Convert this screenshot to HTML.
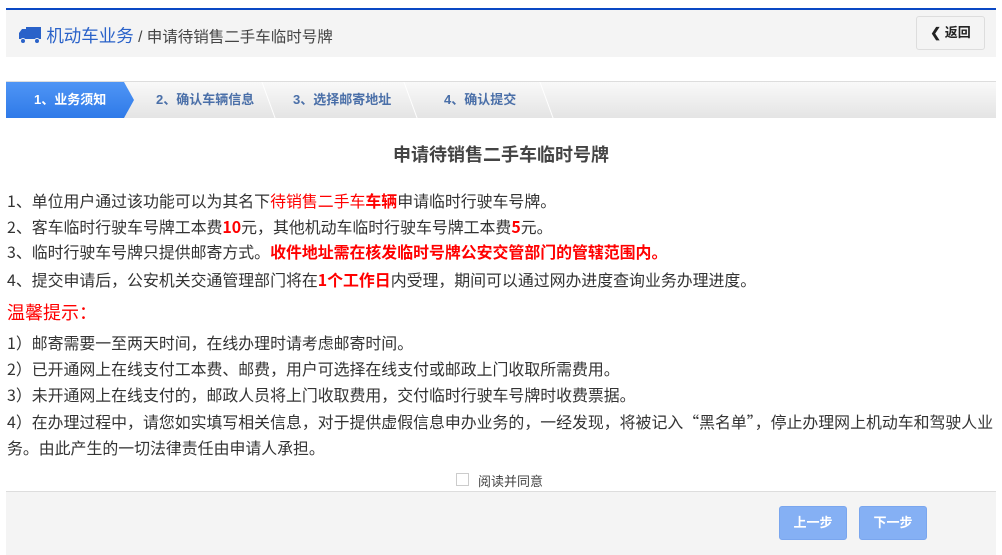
<!DOCTYPE html>
<html><head><meta charset="utf-8"><style>
*{margin:0;padding:0;box-sizing:border-box}
body{width:1002px;height:555px;background:#fff;font-family:"Liberation Sans","Noto Sans CJK SC",sans-serif;color:#333;position:relative;overflow:hidden}
.topline{position:absolute;left:6px;top:8px;width:990px;height:2px;background:#0a48c4}
.hdr{position:absolute;left:6px;top:10px;width:990px;height:47px;background:#f4f4f4}
.crumb{position:absolute;left:12px;top:13px;font-size:15.5px;color:#444;white-space:nowrap}
.crumb .b{color:#2a62c9;font-size:17.5px}
.back{position:absolute;left:910px;top:6px;width:69px;height:34px;border:1px solid #ddd;border-radius:3px;background:#f4f4f4;font-size:13px;font-weight:bold;color:#222;text-align:center;line-height:32px}
.steps{position:absolute;left:6px;top:81px;width:990px;height:37px;background:linear-gradient(#f9f9f9,#e4e4e4);border-top:1px solid #ddd}
.st{position:absolute;top:0;height:36px;line-height:36px;font-size:13px;font-weight:bold;color:#4a6fa8;white-space:nowrap}
.s1{position:absolute;left:0;top:0;width:128px;height:36px;background:linear-gradient(#4f95f5,#2f7ae8);clip-path:polygon(0 0,118px 0,128px 18px,118px 36px,0 36px)}
.sep{position:absolute;top:0;width:1px;height:36px;background:#fff;transform:skewX(20deg)}
.title{position:absolute;left:0;width:1002px;top:141px;text-align:center;font-size:18px;font-weight:bold;color:#444}
.p{position:absolute;left:7px;font-size:15.9px;white-space:nowrap;color:#333;font-family:"Noto Sans CJK SC",sans-serif;line-height:20px}
.r{color:#f00}.rb{color:#f00;font-weight:bold}
.tip{position:absolute;left:7px;top:300px;font-size:18px;color:#f00;font-family:"Noto Sans CJK SC",sans-serif;line-height:24px}
.chk{position:absolute;left:456px;top:473px;width:13px;height:13px;border:1px solid #ccc;background:#fff}
.agree{position:absolute;left:478px;top:471px;font-size:13px;color:#444}
.foot{position:absolute;left:6px;top:491px;width:990px;height:64px;background:#f4f4f4;border-top:1px solid #ddd}
.btn{position:absolute;top:14px;width:68px;height:34px;background:#85b0f4;border:1px solid #7aa6ee;border-radius:3px;color:#fff;font-size:13px;font-weight:bold;text-align:center;line-height:32px}
</style></head><body>
<div class="topline"></div>
<div class="hdr">
<div class="crumb"><svg width="24" height="18" viewBox="0 0 24 18" style="vertical-align:-2px"><path d="M8 1h15v12H8z M1 7l3-4h4v10H1z" fill="#2a62c9"/><circle cx="5" cy="15" r="2.5" fill="#2a62c9" stroke="#f4f4f4"/><circle cx="19" cy="15" r="2.5" fill="#2a62c9" stroke="#f4f4f4"/></svg> <span class="b">机动车业务</span> / 申请待销售二手车临时号牌</div>
<div class="back">❮ 返回</div>
</div>
<div class="steps">
<div class="s1"></div>
<div class="st" style="left:28px;color:#fff">1、业务须知</div>
<div class="st" style="left:150px">2、确认车辆信息</div>
<div class="sep" style="left:262px"></div>
<div class="st" style="left:287px">3、选择邮寄地址</div>
<div class="sep" style="left:404px"></div>
<div class="st" style="left:438px">4、确认提交</div>
<div class="sep" style="left:540px"></div>
</div>
<div class="title">申请待销售二手车临时号牌</div>
<div class="p" style="top:191px">1、单位用户通过该功能可以为其名下<span class="r">待销售二手车</span><span class="rb">车辆</span>申请临时行驶车号牌。</div>
<div class="p" style="top:217px">2、客车临时行驶车号牌工本费<span class="rb">10</span>元，其他机动车临时行驶车号牌工本费<span class="rb">5</span>元。</div>
<div class="p" style="top:242px">3、临时行驶车号牌只提供邮寄方式。<span class="rb">收件地址需在核发临时号牌公安交管部门的管辖范围内。</span></div>
<div class="p" style="top:270px">4、提交申请后，公安机关交通管理部门将在<span class="rb">1个工作日</span>内受理，期间可以通过网办进度查询业务办理进度。</div>
<div class="tip">温馨提示：</div>
<div class="p" style="top:333px">1）邮寄需要一至两天时间，在线办理时请考虑邮寄时间。</div>
<div class="p" style="top:359px">2）已开通网上在线支付工本费、邮费，用户可选择在线支付或邮政上门收取所需费用。</div>
<div class="p" style="top:385px">3）未开通网上在线支付的，邮政人员将上门收取费用，交付临时行驶车号牌时收费票据。</div>
<div class="p" style="top:412px">4）在办理过程中，请您如实填写相关信息，对于提供虚假信息申办业务的，一经发现，将被记入“黑名单”，停止办理网上机动车和驾驶人业</div>
<div class="p" style="top:438px">务。由此产生的一切法律责任由申请人承担。</div>
<div class="chk"></div><div class="agree">阅读并同意</div>
<div class="foot">
<div class="btn" style="left:773px">上一步</div>
<div class="btn" style="left:853px">下一步</div>
</div>
</body></html>
